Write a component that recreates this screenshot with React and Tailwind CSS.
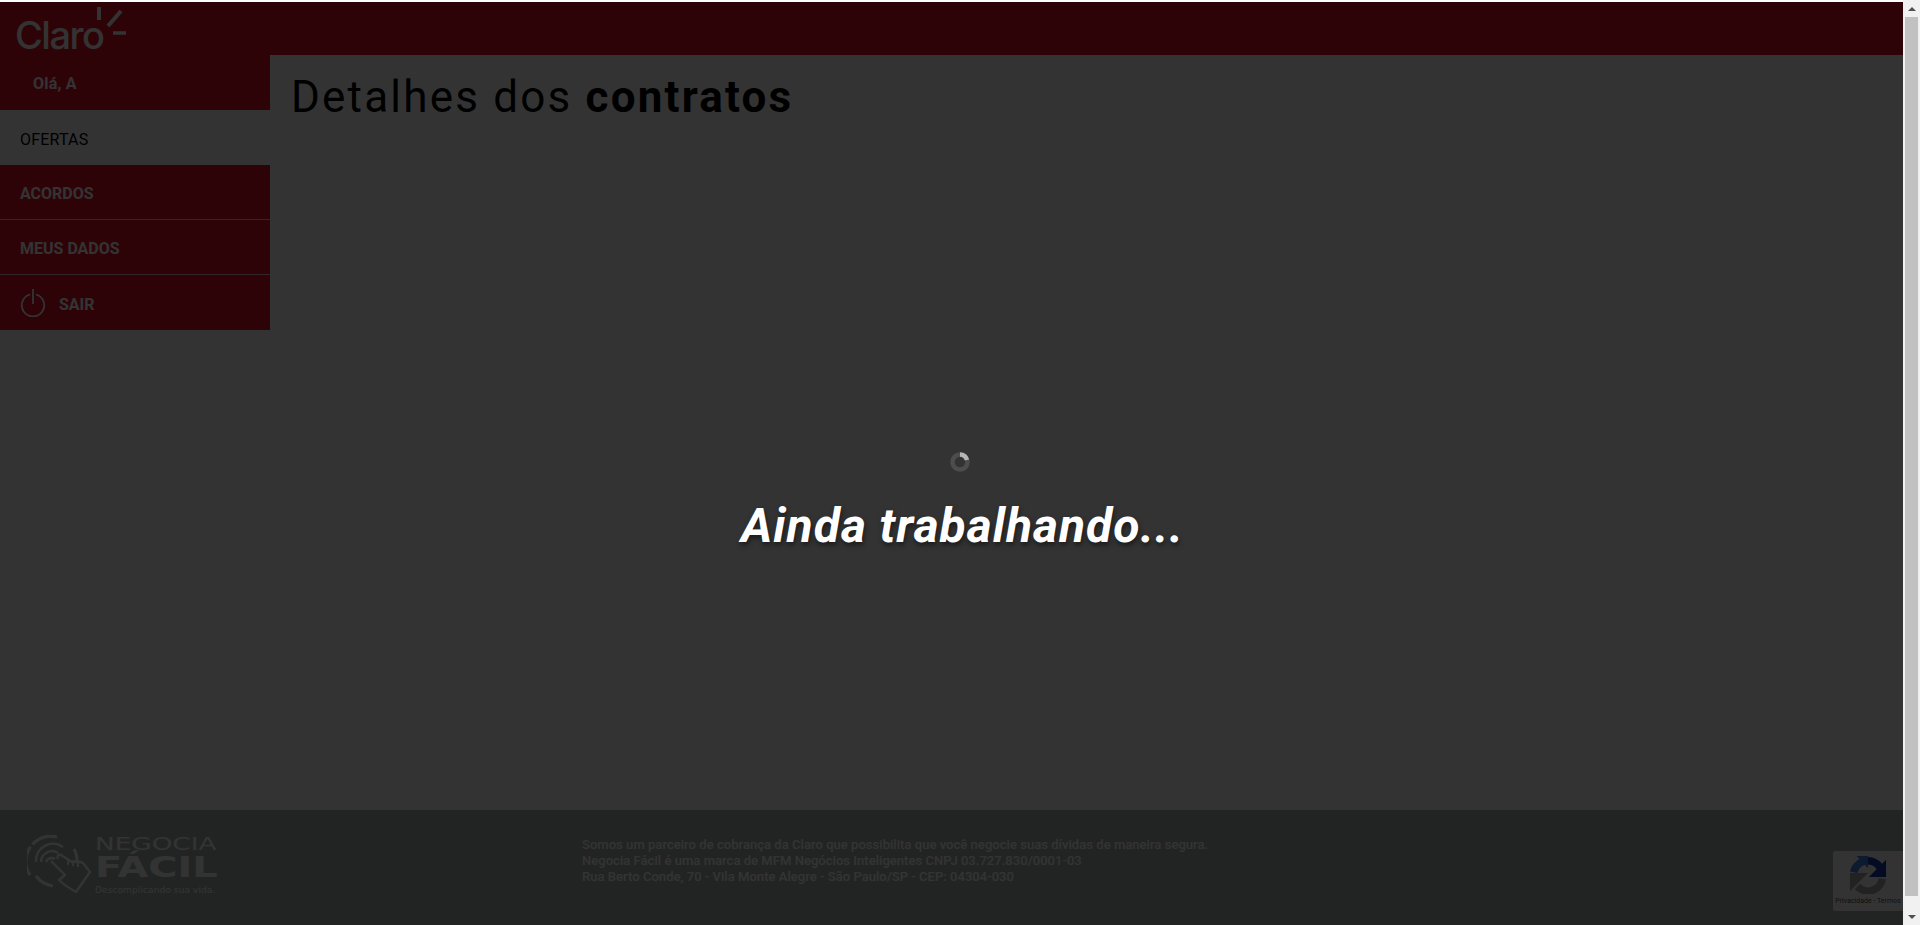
const din = { fontFamily: '"Roboto", "Liberation Sans", sans-serif' };

function ClaroLogo() {
    return (
        <div className="relative w-[130px] h-[53px] ml-[15px]">
            <span className="absolute left-0 top-[11px] text-[38px] leading-[44px] tracking-[-1.5px] font-medium text-white font-['Inter',sans-serif]">Claro</span>
            <svg className="absolute left-0 top-0" width="130" height="53" viewBox="0 0 130 53" fill="none" stroke="#ffffff" strokeWidth="4">
                <path d="M84 5V18" />
                <path d="M106 9L93 24" />
                <path d="M98 31H111" strokeWidth="3.5" />
            </svg>
        </div>
    );
}

function NavItem({ label, active, border }) {
    return (
        <div className={`h-[55px] flex items-center pl-[20px] pt-[4px] text-[16px] ${active ? 'bg-white text-black font-normal tracking-[0.2px]' : 'bg-[#e60f28] text-white font-bold'} ${border ? 'border-b border-white/70' : ''}`}>
            {label}
        </div>
    );
}

function NegociaLogo() {
    return (
        <div className="flex items-start pl-[27px] pt-[25px]">
            <svg width="65" height="62" viewBox="0 0 65 62" fill="none" stroke="#ffffff" className="shrink-0">
                <path d="M3 40A25 25 0 0 1 30 2" strokeWidth="3" strokeDasharray="30 3 40 0" />
                <path d="M47 14A25 25 0 0 1 50 28" strokeWidth="3" />
                <path d="M9 41A25 25 0 0 0 26 51" strokeWidth="3" />
                <path d="M9 27A17 17 0 0 1 36 12" strokeWidth="2.5" />
                <path d="M14 27A11 11 0 0 1 31 18" strokeWidth="2.5" />
                <path d="M19 27A6 6 0 0 1 28 24" strokeWidth="2.5" />
                <path d="M24 26L38 40L32 45C36 49 42 53 49 57L63 37L56 28C53 26 48 27 45 27L34 20C31 19 30 21 31 24" strokeWidth="2.4" strokeLinejoin="round" />
                <path d="M41 24V30M46 25V31M51 26V32" strokeWidth="2" />
            </svg>
            <div className="ml-[3px] text-white font-['DejaVu_Sans',sans-serif] leading-none">
                <div className="mt-[-1px] text-[18px] h-[19px] leading-[19px] origin-left scale-x-[1.46] whitespace-nowrap">NEGOCIA</div>
                <div className="text-[28px] h-[29px] leading-[29px] font-bold origin-left scale-x-[1.42] whitespace-nowrap">FÁCIL</div>
                <div className="mt-[2px] text-[9px] leading-[12px] tracking-[0.1px] whitespace-nowrap">Descomplicando sua vida.</div>
            </div>
        </div>
    );
}

function Recaptcha() {
    return (
        <div className="absolute right-0 bottom-[14px] w-[70px] h-[60px] bg-white rounded-l-[2px] flex flex-col items-center pt-[5px]">
            <svg width="38" height="38" viewBox="0 0 40 40" fill="none" strokeWidth="8">
                <path d="M20 5A15 15 0 0 0 5 17" stroke="#4285f4" />
                <path d="M8 0H20V13Z" fill="#4285f4" stroke="none" />
                <path d="M20 5A15 15 0 0 1 34 15" stroke="#1c3aa9" />
                <path d="M39 4V22H21Z" fill="#1c3aa9" stroke="none" />
                <path d="M35 24A15 15 0 0 1 9 32" stroke="#ababab" />
                <path d="M1 18H20L1 37Z" fill="#ababab" stroke="none" />
            </svg>
            <span className="text-[7px] leading-[9px] mt-[3px] text-[#555] whitespace-nowrap font-['Roboto',sans-serif]">Privacidade - Termos</span>
        </div>
    );
}

export default function App() {
    return (
        <div className="flex h-screen overflow-hidden bg-white" style={din}>
            <div className="relative flex-1 flex flex-col pt-[2px] min-w-0">
                <header className="h-[53px] bg-[#e60f28] shrink-0">
                    <ClaroLogo />
                </header>

                <div className="flex-1 flex min-h-0">
                    <aside className="w-[270px] shrink-0 self-start">
                        <div className="h-[55px] bg-[#e60f28] flex items-center pl-[33px] pt-[3px] text-[16px] tracking-[0.2px] font-bold text-white">Olá, A</div>
                        <NavItem label="OFERTAS" active />
                        <NavItem label="ACORDOS" border />
                        <NavItem label="MEUS DADOS" border />
                        <div className="h-[55px] bg-[#e60f28] flex items-center pl-[20px] text-[16px] font-bold text-white">
                            <svg width="26" height="28" viewBox="0 0 26 28" fill="none" stroke="#ffffff" strokeWidth="1.8">
                                <path d="M10 5.5A11.2 11.2 0 1 0 16 5.5" />
                                <path d="M13 0V15" />
                            </svg>
                            <span className="ml-[13px] pt-[4px]">SAIR</span>
                        </div>
                    </aside>
                    <main className="flex-1 pl-[21px] pt-[16px]">
                        <h1 className="text-[44px] leading-[52px] text-black font-normal tracking-[2.2px]">
                            Detalhes dos <b className="font-bold">contratos</b>
                        </h1>
                    </main>
                </div>

                <footer className="relative h-[115px] shrink-0 bg-[#aab4b4] flex">
                    <div className="w-[582px] shrink-0">
                        <NegociaLogo />
                    </div>
                    <div className="pt-[27px] text-[13px] leading-[16px] font-medium tracking-[0.04px] text-white">
                        <p>Somos um parceiro de cobrança da Claro que possibilita que você negocie suas dívidas de maneira segura.</p>
                        <p>Negocia Fácil é uma marca de MFM Negócios Inteligentes CNPJ 03.727.830/0001-03</p>
                        <p>Rua Berto Conde, 70 - Vila Monte Alegre - São Paulo/SP - CEP: 04304-030</p>
                    </div>
                    <Recaptcha />
                </footer>

                {/* loading overlay */}
                <div className="absolute inset-x-0 top-[2px] bottom-0 bg-black/80 flex flex-col items-center pl-[17px] pt-[450px]">
                    <svg width="20" height="20" viewBox="0 0 20 20" fill="none" strokeWidth="4.5">
                        <circle cx="10" cy="10" r="7.5" stroke="#4d4d4d" />
                        <path d="M10 2.5A7.5 7.5 0 0 1 17 8" stroke="#b5b5b5" />
                    </svg>
                    <div className="mt-[26px] ml-[5px] text-[48px] leading-[56px] font-bold italic tracking-[1px] text-white [text-shadow:1px_3px_5px_#1a1a1a]">Ainda trabalhando...</div>
                </div>
            </div>

            {/* browser scrollbar */}
            <div className="w-[17px] shrink-0 bg-[#f1f1f1] flex flex-col items-center">
                <div className="h-[17px] flex items-center justify-center">
                    <div className="w-0 h-0 border-x-[4px] border-x-transparent border-b-[4px] border-b-[#505050]" />
                </div>
                <div className="w-[13px] h-[879px] bg-[#c1c1c1]" />
                <div className="h-[29px] flex items-center justify-center pt-[12px]">
                    <div className="w-0 h-0 border-x-[4px] border-x-transparent border-t-[4px] border-t-[#505050]" />
                </div>
            </div>
        </div>
    );
}
